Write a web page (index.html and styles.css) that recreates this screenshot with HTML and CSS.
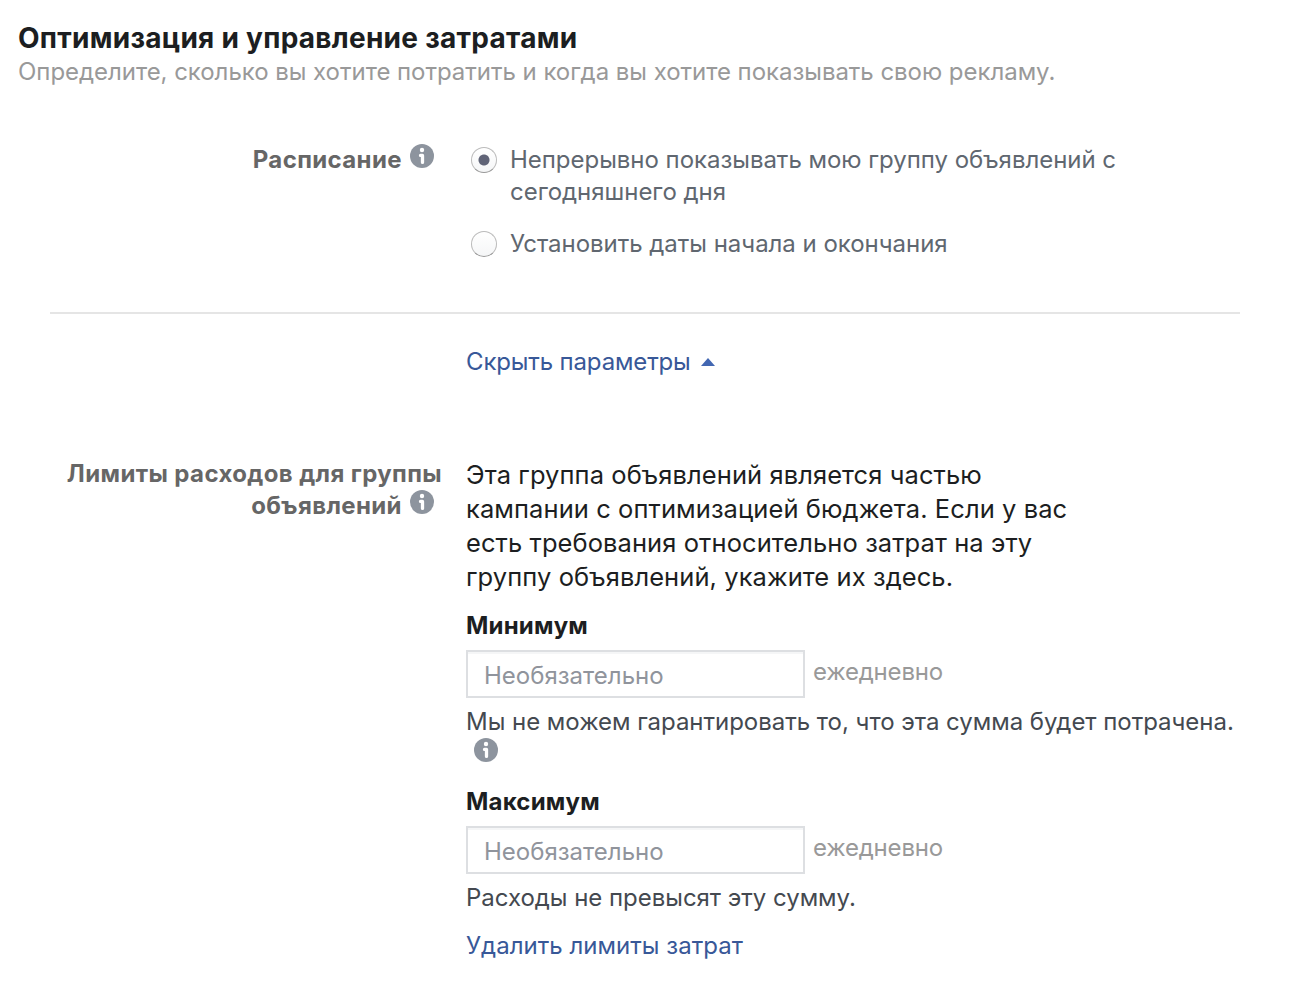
FILE: index.html
```html
<!DOCTYPE html>
<html lang="ru">
<head>
    <meta charset="UTF-8" />
    <title>Оптимизация и управление затратами</title>
    <link rel="stylesheet" href="styles.css">
</head>
<body>
    <svg width="0" height="0" class="sprite">
        <symbol id="info" viewBox="0 0 24 24">
            <circle cx="12" cy="12" r="12" fill="#8d949e" />
            <circle cx="12" cy="6" r="2.200" fill="#fff" />
            <path d="M10.500 11.400H12.500V18.400" fill="none" stroke="#fff" stroke-width="3.300" stroke-linecap="round" stroke-linejoin="round" />
        </symbol>
    </svg>

    <header class="header">
        <h1>Оптимизация и управление затратами</h1>
        <p>Определите, сколько вы хотите потратить и когда вы хотите показывать свою рекламу.</p>
    </header>

    <section class="row schedule">
        <div class="label">
            <span>Расписание</span>
            <svg class="info"><use href="#info" /></svg>
        </div>
        <div class="content">
            <label class="option">
                <input type="radio" name="schedule" checked>
                <span>Непрерывно показывать мою группу объявлений с<br>сегодняшнего дня</span>
            </label>
            <label class="option">
                <input type="radio" name="schedule">
                <span>Установить даты начала и окончания</span>
            </label>
        </div>
    </section>

    <hr>

    <a class="toggle" href="#">Скрыть параметры<svg class="caret" viewBox="0 0 14 8"><path d="M0 8L7 0L14 8Z" fill="#4267b2" /></svg></a>

    <section class="row limits">
        <div class="label">
            <span>Лимиты расходов для группы<br>объявлений</span>
            <svg class="info"><use href="#info" /></svg>
        </div>
        <div class="content">
            <p class="intro">Эта группа объявлений является частью<br>кампании с оптимизацией бюджета. Если у вас<br>есть требования относительно затрат на эту<br>группу объявлений, укажите их здесь.</p>

            <h2>Минимум</h2>
            <div class="field">
                <input type="text" placeholder="Необязательно">
                <span>ежедневно</span>
            </div>
            <p class="note">Мы не можем гарантировать то, что эта сумма будет потрачена.</p>
            <svg class="info note-info"><use href="#info" /></svg>

            <h2>Максимум</h2>
            <div class="field">
                <input type="text" placeholder="Необязательно">
                <span>ежедневно</span>
            </div>
            <p class="note">Расходы не превысят эту сумму.</p>
            <a class="remove" href="#">Удалить лимиты затрат</a>
        </div>
    </section>
</body>
</html>
```

FILE: styles.css
```css
* {
    box-sizing: border-box;
}
body {
    margin: 0;
    height: 1002px;
    overflow: hidden;
    background: #fff;
    color: #1c1e21;
    font-family: Inter, sans-serif;
    font-size: 24px;
    line-height: 32px;
    letter-spacing: -0.03px;
    white-space: nowrap;
}
h1, h2, p {
    margin: 0;
}
a {
    color: #385898;
    text-decoration: none;
}
.sprite {
    display: block;
}
.header {
    padding: 21px 18px 0;
}
h1 {
    font-size: 28px;
    line-height: 34px;
    font-weight: 700;
    letter-spacing: 0.27px;
}
.header p {
    margin-top: 1px;
    color: #999;
    letter-spacing: -0.04px;
}
.row {
    display: flex;
}
.label {
    width: 442px;
    margin-right: 24px;
    text-align: right;
    color: #666;
    font-weight: 700;
    letter-spacing: 0.38px;
}
.info {
    width: 24px;
    height: 24px;
    margin: 0 8px 0 0;
    vertical-align: 0;
}
.label .info {
    margin-left: 2px;
}
.schedule {
    margin-top: 56px;
}
.option {
    display: flex;
    margin: 0 0 20px 5px;
    color: #606770;
}
.option input {
    appearance: none;
    width: 26px;
    height: 26px;
    margin: 3px 13px 0 0;
    border: 1px solid #bbb;
    border-bottom-color: #999;
    border-radius: 50%;
    background: linear-gradient(#fff, #f5f6f7);
}
.option input:checked {
    background: radial-gradient(circle, #606477 5px, transparent 6px), linear-gradient(#fff, #f5f6f7);
}
hr {
    width: 1190px;
    height: 2px;
    margin: 32px 0 0 50px;
    border: 0;
    background: #e5e5e5;
}
.toggle {
    display: flex;
    align-items: center;
    margin: 32px 0 0 466px;
    letter-spacing: -0.15px;
}
.caret {
    width: 14px;
    height: 8px;
    margin-left: 10px;
}
.limits {
    margin-top: 80px;
}
.intro {
    font-size: 25.5px;
    line-height: 34px;
    letter-spacing: 0.08px;
}
h2 {
    font-size: 24px;
    line-height: 32px;
    margin-top: 16px;
    letter-spacing: 0.2px;
}
.field {
    display: flex;
    margin-top: 8px;
    color: #999;
}
.field input {
    width: 339px;
    height: 48px;
    margin-right: 8px;
    padding: 3px 16px 0;
    border: 2px solid #dddfe2;
    box-shadow: inset 0 2px 0 #f5f6f7;
    font: inherit;
}
.field input::placeholder {
    color: #90949c;
}
.field span {
    line-height: 44px;
    letter-spacing: -0.2px;
}
.note {
    margin-top: 8px;
    color: #444950;
}
.note-info {
    display: block;
    margin: 0 0 24px 8px;
}
.remove {
    display: block;
    margin-top: 16px;
    letter-spacing: 0.02px;
}
```
